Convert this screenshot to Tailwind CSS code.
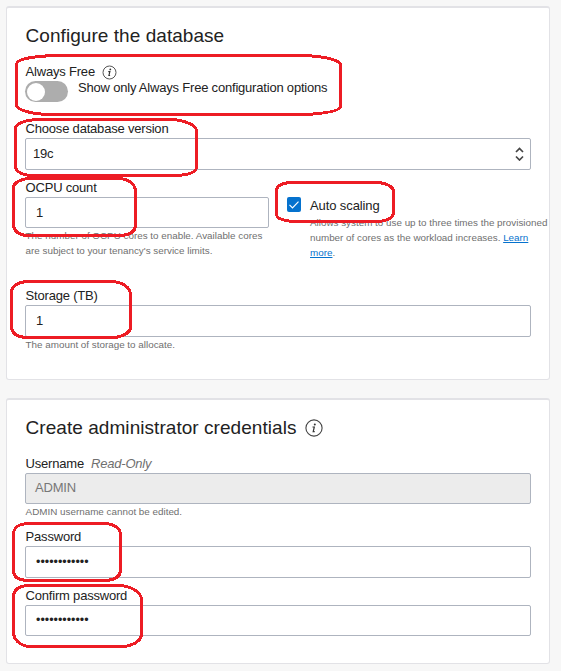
<!DOCTYPE html>
<html lang="en">
<head>
<meta charset="utf-8">
<title>Configure the database</title>
<script src="https://cdn.jsdelivr.net/npm/@tailwindcss/browser@4"></script>
</head>
<body class="relative h-[671px] w-[561px] overflow-hidden bg-[#f7f7f7] pt-[6px] pl-[6px] font-['Liberation_Sans',Arial,sans-serif] text-[13px] leading-4 tracking-[-0.2px] text-[#222]">
<section class="flex h-[374px] w-[544px] flex-col rounded-[3px] border border-t-2 border-[#e2e2e6] bg-white px-[18px] pt-[16px]">
  <h2 class="pl-[0.6px] text-[19px] leading-6 tracking-[0.05px] whitespace-nowrap">Configure the database</h2>
  <div class="mt-[16px] flex h-4 items-center pl-[0.6px]"><span>Always Free</span>
    <svg class="ml-[7px]" width="15" height="15" viewBox="0 0 15 15"><circle cx="7.5" cy="7.5" r="6.5" fill="none" stroke="#555"/><circle cx="8.3" cy="4.4" r=".9" fill="#333"/><path d="M6.3 6.6h1.6l-1 3.9h1.2" fill="none" stroke="#333" stroke-width="1.1"/></svg>
  </div>
  <div class="flex h-[22px]">
    <div class="mt-[1px] flex h-[21px] w-[43px] items-center rounded-full bg-[#adadad] pl-[1.5px]"><div class="size-[18px] rounded-full bg-white"></div></div>
    <span class="ml-[10px] whitespace-nowrap">Show only Always Free configuration options</span>
  </div>
  <label class="mt-[19px] mb-px h-4 pl-[0.6px]">Choose database version</label>
  <div class="flex h-8 items-center justify-between rounded-[2px] border border-[#aeb4bf] pr-[6px] pl-[7px]"><span>19c</span>
    <svg width="9" height="14" viewBox="0 0 9 14" fill="none" stroke="#444" stroke-width="1.7"><path d="M1 5 4.5 1.5 8 5M1 9.5 4.5 13 8 9.5"/></svg>
  </div>
  <div class="mt-[10px] flex h-[108px]">
    <div class="flex w-[244px] shrink-0 flex-col">
      <label class="mb-px h-4 pl-[0.6px]">OCPU count</label>
      <div class="flex h-[31px] items-center rounded-[2px] border border-[#aeb4bf] pl-[10px]">1</div>
      <p class="pl-[0.6px] text-[9.85px] leading-[15px] tracking-normal whitespace-nowrap text-[#6f6f6f]">The number of OCPU cores to enable. Available cores<br>are subject to your tenancy's service limits.</p>
    </div>
    <div class="ml-[18px] flex shrink-0 pt-[17px]">
      <svg class="h-[15px] w-[14px]" viewBox="0 0 14 15"><rect width="14" height="15" rx="2" fill="#0572ce"/><path d="m2.5 7.800 3 3 6-6.200" fill="none" stroke="#fff" stroke-width="1.2"/></svg>
      <div class="ml-[9px]">
        <div class="h-[18px] pt-[1px] tracking-[-0.1px] whitespace-nowrap">Auto scaling</div>
        <p class="text-[9.85px] leading-[15px] tracking-normal whitespace-nowrap text-[#6f6f6f]">Allows system to use up to three times the provisioned<br>number of cores as the workload increases. <a class="text-[#0572ce] underline">Learn</a><br><a class="text-[#0572ce] underline">more</a>.</p>
      </div>
    </div>
  </div>
  <label class="mb-px h-4 pl-[0.6px]">Storage (TB)</label>
  <div class="flex h-8 items-center rounded-[2px] border border-[#aeb4bf] pl-[10px]">1</div>
  <p class="pl-[0.6px] text-[9.85px] leading-[15px] tracking-normal text-[#6f6f6f]">The amount of storage to allocate.</p>
</section>

<section class="mt-[18px] flex h-[266px] w-[544px] flex-col rounded-[3px] border border-t-2 border-[#e2e2e6] bg-white px-[18px] pt-[16px]">
  <div class="flex h-6 items-center pl-[0.6px]"><h2 class="text-[19px] leading-6 tracking-[0.05px] whitespace-nowrap">Create administrator credentials</h2>
    <svg class="ml-[9px]" width="18" height="18" viewBox="0 0 18 18"><circle cx="9" cy="9" r="8.1" fill="none" stroke="#444" stroke-width="1.1"/><circle cx="9.8" cy="5.4" r="1" fill="#333"/><path d="M7.500 8h1.800l-1.100 4.600h1.500" fill="none" stroke="#333" stroke-width="1.2"/></svg>
  </div>
  <label class="mt-[16px] mb-px flex h-4 pl-[0.6px]">Username<i class="ml-[7px] text-[#6f6f6f]">Read-Only</i></label>
  <div class="flex h-[31px] items-center rounded-[2px] border border-[#aeb4bf] bg-[#ececec] pb-[2px] pl-[9px] text-[#777]">ADMIN</div>
  <p class="pl-[0.6px] text-[9.85px] leading-[15px] tracking-normal text-[#6f6f6f]">ADMIN username cannot be edited.</p>
  <label class="mt-[10px] mb-px h-4 pl-[0.6px]">Password</label>
  <div class="flex h-8 items-center rounded-[2px] border border-[#aeb4bf] pl-[10px] text-[12.5px] tracking-normal">••••••••••••</div>
  <label class="mt-[10px] mb-px h-4 pl-[0.6px]">Confirm password</label>
  <div class="flex h-[31px] items-center rounded-[2px] border border-[#aeb4bf] pb-[2px] pl-[10px] text-[12.5px] tracking-normal">••••••••••••</div>
</section>

<!-- Hand-drawn highlight rings over the form -->
<svg class="pointer-events-none absolute top-0 left-0" width="561" height="671" viewBox="0 0 561 671" fill="none" stroke="#ed1c24" stroke-width="3" shape-rendering="crispEdges">
  <path d="M54 55.500C34 56.500 17.500 58.500 16.500 64V105C16.500 110 32 114 46 114.500H305C325 113.500 340.500 111 340.500 106V64C338 59 320 56 303 55.500Z"/>
  <path d="M38 119.500C26 120 15.500 123 15.500 129V166C15.500 172 23 175.500 33 175.500H178C190 174.500 196.500 172 196.500 167V131C196.500 125 185 120.500 172 119.500Z"/>
  <path d="M27 178.500C19 180 13.500 183 13.500 188V224C13.500 231 18 234.500 26 235.500H122C131 234.500 135.500 231 135.500 225V192C135.500 184 129 179 119 178.500Z"/>
  <path d="M291 182.500C283 183 276.500 185 276.500 191V215C277.500 219 285 221 295 221.500H379C388 220.500 393.500 217 393.500 212V192C393.500 186 385 182.500 376 182.500Z"/>
  <path d="M28 281.500C18 282 11.500 286 11.500 292V327C11.500 333 17 336.500 25 337.500H116C125 335.500 130.500 332 130.500 327V295C130.500 287 122 282 112 281.500Z"/>
  <path d="M28 523.500C19 524 13.500 528 13.500 534V571C13.500 577 19 580 27 580.500H107C116 579.500 120.500 576 120.500 570V535C120.500 528 114 524 105 523.500Z"/>
  <path d="M28 585.500C18 586 13.500 590 13.500 597V632C13.500 640 20 645.500 29 646.500H124C135 645 141.500 640 141.500 634V600C141.500 592 131 586 119 585.500Z"/>
</svg>
</body>
</html>
